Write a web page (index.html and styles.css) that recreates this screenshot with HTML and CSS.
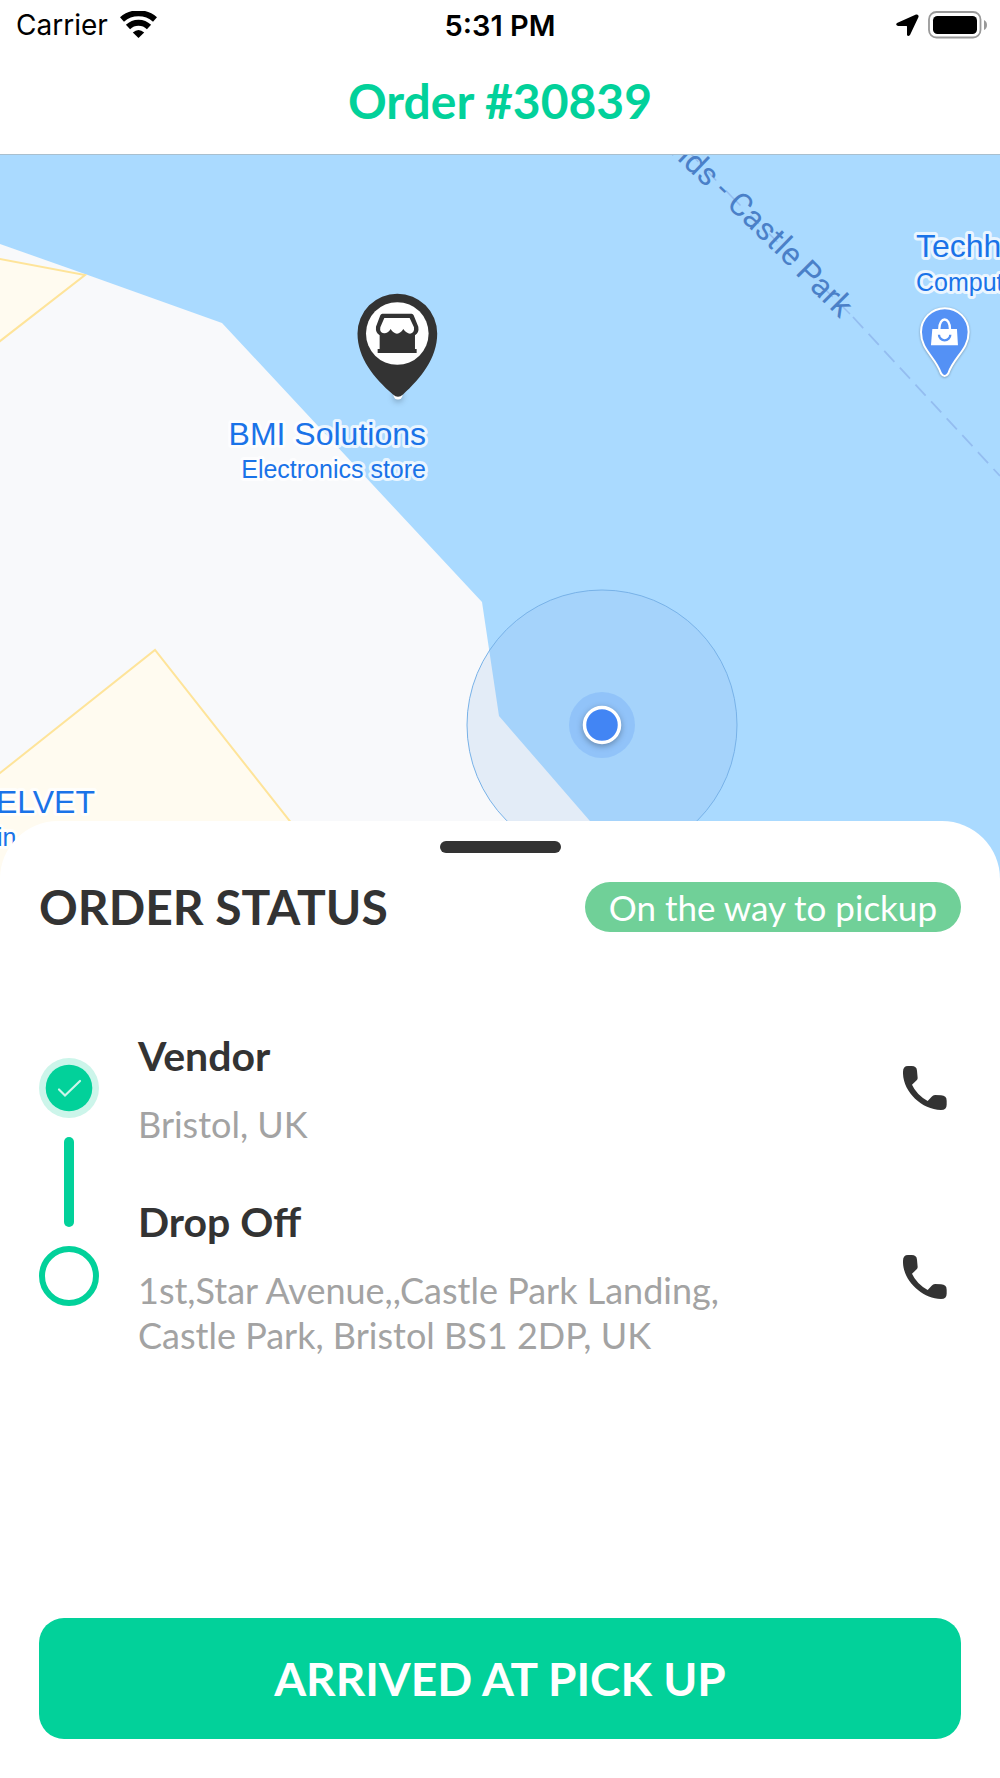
FILE: index.html
```html
<!DOCTYPE html>
<html lang="en">
<head>
<meta charset="utf-8">
<meta name="viewport" content="width=device-width, initial-scale=1">
<title>Order #30839</title>
<link rel="stylesheet" href="styles.css">
</head>
<body>
<div class="status-bar">
  <div class="status-side">
    <span>Carrier</span>
    <svg class="wifi" width="37" height="28" viewBox="0 0 37 28" aria-hidden="true">
      <g fill="none" stroke="#000">
        <path d="M2 8.500A25 25 0 0 1 35 8.500" stroke-width="6"/>
        <path d="M8 16A15 15 0 0 1 29 16" stroke-width="6"/>
      </g>
      <path d="M12.800 21.500Q18.500 16.500 24.200 21.500L18.500 27Z"/>
    </svg>
  </div>
  <time class="clock">5:31 PM</time>
  <div class="status-side status-right">
    <svg width="23" height="23" viewBox="0 0 23 23" aria-hidden="true">
      <path d="M1 9L20 .5Q23 0 22.500 3L14 21Q12 23 11 21V12.500Q11 12 10.500 12H2Q-1 11 1 9Z"/>
    </svg>
    <svg class="battery" width="56" height="28" viewBox="0 0 56 28" aria-hidden="true">
      <rect x="1" y="1" width="51.500" height="25.500" rx="7.500" fill="none" stroke="#999" stroke-width="1.800"/>
      <rect x="5" y="5" width="44" height="18" rx="4.500"/>
      <path d="M56 9Q59 10.500 59 14T56 19Z" fill="#999"/>
    </svg>
  </div>
</div>
<header class="title-bar"><h1>Order #30839</h1></header>

<main class="content">
  <svg class="map" viewBox="0 0 1000 725" role="img" aria-label="Map of the route">
    <defs><path id="ferry" d="M606 -64Q656 -15 728 53T793 117L840 164"/></defs>
    <rect width="1000" height="725" fill="#aadaff"/>
    <path d="M0 89L85 119L222 168L482 447L499 561L641 725H0Z" fill="#f8f9fb"/>
    <g fill="#fffbf0" stroke="#fee49a" stroke-width="2">
      <path d="M-5 103L85 120L-5 190Z"/>
      <path d="M-5 622L155 495L337 726H-5Z"/>
    </g>
    <path d="M690 -2L732 42M732 42L850 159" fill="none" stroke="#94bdf0" stroke-width="1.500" stroke-dasharray="12 14"/>
    <path d="M853 162L1000 321" fill="none" stroke="#94bdf0" stroke-width="1.800" stroke-dasharray="15 8"/>
    <text class="ferry-name" text-anchor="end"><textPath href="#ferry" startOffset="100%">ands - Castle Park</textPath></text>

    <circle cx="602" cy="570" r="135" fill="#8fbbed" fill-opacity=".2" stroke="#78b2e8" stroke-width="1"/>
    <circle cx="602" cy="570" r="33" fill="#4285f4" fill-opacity=".2"/>
    <circle class="dot" cx="602" cy="570" r="17.500" fill="#4285f4" stroke="#fff" stroke-width="3.500"/>

    <g class="place">
      <text class="place-name" x="426" y="290" text-anchor="end">BMI Solutions</text>
      <text class="place-kind" x="426" y="323" text-anchor="end">Electronics store</text>
      <text class="place-name" x="916" y="102">Techhub</text>
      <text class="place-kind" x="916" y="136">Computer store</text>
      <text class="place-name" x="95" y="658" text-anchor="end">ELVET</text>
      <text class="place-kind" x="-3" y="691">in</text>
    </g>

    <circle class="dot" cx="398" cy="240" r="4.500" fill="#fff"/>
    <path d="M357.500 178.500A39.800 39.800 0 0 1 437.200 178.500C437.200 203 421 223 403 239.500Q398 244 393 239.500C374 223 357.500 203 357.500 178.500Z" fill="#333"/>
    <circle cx="397.300" cy="178.500" r="31.300" fill="#fff"/>
    <g transform="translate(200 115) scale(.3333)">
      <path d="M547 131H635Q639 132 641 136L655 170Q658 188 645 196V237H650V249H533V237H539V196Q526 188 528 170L541 136Q543 132 547 131Z" fill="#333"/>
      <path d="M553 144H629L642 172Q644 190 630 191Q619 190 610 177Q602 190 591 191Q580 190 572 177Q563 191 552 190Q538 188 541 172Z" fill="#fff"/>
    </g>

    <g class="dot" transform="translate(650 -15) scale(.3333)">
      <path d="M813 576A71 71 0 0 1 956 576C956 630 912 650 895 700Q884 716 873 700C856 650 813 630 813 576Z" fill="#5491f5" stroke="#fff" stroke-width="6"/>
      <path d="M847 567H921L924 616H843Z" fill="#fff"/>
      <path d="M868 567C868 529 900 529 900 567" fill="none" stroke="#fff" stroke-width="7"/>
      <path d="M867 584A17 17 0 0 0 901 584" fill="none" stroke="#5491f5" stroke-width="7"/>
    </g>
  </svg>

  <section class="sheet">
    <div class="handle"></div>
    <div class="sheet-head">
      <h2>ORDER STATUS</h2>
      <span class="badge">On the way to pickup</span>
    </div>
    <div class="steps">
      <div class="rail" aria-hidden="true">
        <svg width="60" height="60" viewBox="0 0 60 60">
          <circle cx="30" cy="30" r="30" fill="#ccf5ea"/>
          <circle cx="30" cy="30" r="23.300" fill="#02d19a"/>
          <path d="M20 31.500L26 37.500L41 23" fill="none" stroke="#ccf5ea" stroke-width="2.200" stroke-linecap="round"/>
        </svg>
        <span class="rail-line"></span>
        <span class="rail-open"></span>
      </div>
      <dl class="stops">
        <dt>Vendor</dt>
        <dd>Bristol, UK</dd>
        <dt>Drop Off</dt>
        <dd>1st,Star Avenue,,Castle Park Landing, Castle Park, Bristol BS1 2DP, UK</dd>
      </dl>
      <div class="calls">
        <button class="call" type="button" aria-label="Call vendor">
          <svg width="44" height="44" viewBox="0 0 132 132" aria-hidden="true"><path d="M0 17Q0 0 15 0H26Q41 0 42 14L44 36Q44 40 41 43L27 56Q40 85 74 105L86 92Q90 87 96 87L114 88Q131 89 131 104V116Q131 132 114 132C55 130 -2 75 0 17Z" fill="#333"/></svg>
        </button>
        <button class="call" type="button" aria-label="Call drop off">
          <svg width="44" height="44" viewBox="0 0 132 132" aria-hidden="true"><path d="M0 17Q0 0 15 0H26Q41 0 42 14L44 36Q44 40 41 43L27 56Q40 85 74 105L86 92Q90 87 96 87L114 88Q131 89 131 104V116Q131 132 114 132C55 130 -2 75 0 17Z" fill="#333"/></svg>
        </button>
      </div>
    </div>
    <button class="primary" type="button">ARRIVED AT PICK UP</button>
  </section>
</main>
</body>
</html>
```
FILE: styles.css
```css
* {
  box-sizing: border-box;
}

body {
  margin: 0;
  min-height: 100vh;
  display: flex;
  flex-direction: column;
  background: #fff;
  color: #333;
  font-family: Lato, "Liberation Sans", sans-serif;
}

h1, h2, dl, dt, dd {
  margin: 0;
}

button {
  border: 0;
  padding: 0;
  font-family: inherit;
  cursor: pointer;
}

.status-bar {
  display: grid;
  grid-template-columns: 1fr auto 1fr;
  align-items: center;
  height: 48px;
  padding: 2px 16px 0;
  color: #000;
  font-family: Inter, "Liberation Sans", sans-serif;
  font-size: 28px;
}

.status-side {
  display: flex;
  align-items: center;
  gap: 12px;
}

.status-right {
  justify-content: flex-end;
  gap: 9px;
}

.battery {
  overflow: visible;
}

.clock {
  font-size: 29px;
  font-weight: 600;
}

.title-bar {
  display: flex;
  align-items: center;
  justify-content: center;
  height: 107px;
  border-bottom: 1px solid #a9bfce;
}

h1 {
  color: #02d19a;
  font-size: 48px;
  line-height: 56px;
}

.content {
  flex: 1;
  display: flex;
  flex-direction: column;
}

.map {
  display: block;
  width: 100%;
}

.ferry-name {
  fill: #4a80c8;
  font-family: Roboto, "Liberation Sans", sans-serif;
  font-size: 32px;
}

.place {
  fill: #1a73e8;
  stroke: #fff;
  stroke-opacity: .75;
  stroke-width: 6px;
  stroke-linejoin: round;
  paint-order: stroke;
  font-family: "Liberation Sans", Arial, sans-serif;
}

.place-name {
  font-size: 32px;
}

.place-kind {
  font-size: 25px;
}

.dot {
  filter: drop-shadow(0 2px 3px rgba(0, 0, 0, .3));
}

.sheet {
  position: relative;
  flex: 1;
  display: flex;
  flex-direction: column;
  margin-top: -59px;
  padding: 20px 39px 39px;
  border-radius: 58px 58px 0 0;
  background: #fff;
}

.handle {
  align-self: center;
  width: 121px;
  height: 12px;
  border-radius: 6px;
  background: #333;
}

.sheet-head {
  display: flex;
  align-items: center;
  justify-content: space-between;
  margin-top: 29px;
}

h2 {
  font-size: 48px;
  line-height: 50px;
}

.badge {
  padding: 0 24px;
  border-radius: 25px;
  background: #70d098;
  color: #fff;
  font-size: 35px;
  line-height: 50px;
}

.steps {
  display: flex;
  align-items: flex-start;
  margin-top: 100px;
}

.rail {
  display: flex;
  flex-direction: column;
  align-items: center;
  gap: 19px;
  padding-top: 26px;
}

.rail-line {
  width: 10px;
  height: 90px;
  border-radius: 5px;
  background: #02d19a;
}

.rail-open {
  width: 60px;
  height: 60px;
  border: 6px solid #02d19a;
  border-radius: 50%;
}

.stops {
  flex: 1;
  padding: 0 120px 0 39px;
}

.stops dt {
  font-size: 41px;
  font-weight: 700;
  line-height: 48px;
}

.stops dd {
  margin: 22px 0 51px;
  color: #a3a3a3;
  font-size: 36px;
  line-height: 45px;
}

.calls {
  display: flex;
  flex-direction: column;
  gap: 145px;
  padding: 34px 14px 0 0;
}

.call {
  display: flex;
  background: none;
}

.primary {
  width: 100%;
  margin-top: auto;
  border-radius: 25px;
  background: #02d19a;
  color: #fff;
  font-size: 46px;
  font-weight: 700;
  line-height: 121px;
}
```
